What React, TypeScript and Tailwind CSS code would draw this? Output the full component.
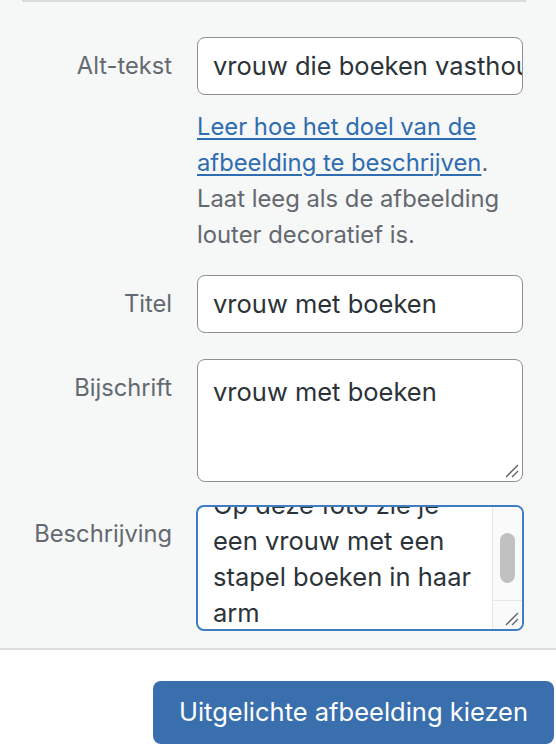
import React from "react";

const font = { fontFamily: "Inter, 'Noto Sans', sans-serif" };

function Grip() {
  return (
    <svg width="14" height="14" viewBox="0 0 14 14" className="absolute right-[3px] bottom-[3px]">
      <line x1="1" y1="13" x2="13" y2="1" stroke="#5b5f63" strokeWidth="1.3" />
      <line x1="7" y1="13" x2="13" y2="7" stroke="#5b5f63" strokeWidth="1.3" />
    </svg>
  );
}

function Label({ children }: { children: React.ReactNode }) {
  return (
    <div className="w-[172px] shrink-0 text-right pt-[11px] text-[23.7px] leading-[36px] text-[#646970]">
      {children}
    </div>
  );
}

export default function App() {
  return (
    <div style={font} className="w-[556px] h-[746px] overflow-hidden bg-[#f6f7f7] flex flex-col">
      <div className="ml-[22px] w-[504px] h-[2px] bg-[#dcdcde] shrink-0" />
      <div className="flex flex-col pt-[35px] h-[646px] shrink-0">
        {/* Alt-tekst */}
        <div className="flex gap-[25px]">
          <Label>Alt-tekst</Label>
          <div className="flex flex-col">
            <div className="w-[326px] h-[58px] rounded-[8px] border border-[#8c8f94] bg-white overflow-hidden pl-[15px] flex items-center">
              <span className="whitespace-nowrap text-[25.5px] text-[#2c3338]">vrouw die boeken vasthoudt</span>
            </div>
            <p className="mt-[14px] w-[326px] text-[23.8px] leading-[36px] text-[#646970]">
              <a className="text-[#2f6db0] underline underline-offset-[3px] decoration-[2px]">
                Leer hoe het doel van de afbeelding te beschrijven
              </a>
              . Laat leeg als de afbeelding louter decoratief is.
            </p>
          </div>
        </div>
        {/* Titel */}
        <div className="flex gap-[25px] mt-[22px]">
          <Label>Titel</Label>
          <div className="w-[326px] h-[58px] rounded-[8px] border border-[#8c8f94] bg-white overflow-hidden pl-[15px] flex items-center">
            <span className="whitespace-nowrap text-[25.5px] text-[#2c3338]">vrouw met boeken</span>
          </div>
        </div>
        {/* Bijschrift */}
        <div className="flex gap-[25px] mt-[26px]">
          <Label>Bijschrift</Label>
          <div className="relative w-[326px] h-[123px] rounded-[8px] border border-[#8c8f94] bg-white overflow-hidden pl-[15px] pt-[14px]">
            <span className="text-[25.5px] leading-[36px] text-[#2c3338]">vrouw met boeken</span>
            <Grip />
          </div>
        </div>
        {/* Beschrijving */}
        <div className="flex gap-[25px] mt-[23px]">
          <Label>Beschrijving</Label>
          <div className="relative w-[328px] h-[126px] -ml-px rounded-[8px] border-2 border-[#3f7cc0] bg-white overflow-hidden">
            <div className="absolute left-[15px] top-[-20px] w-[275px] text-[25.5px] leading-[36px] text-[#2c3338]">
              Op deze foto zie je een vrouw met een stapel boeken in haar arm
            </div>
            <div className="absolute right-0 top-0 bottom-0 w-[30px] bg-[#fafafa] border-l border-[#e6e6e6] flex flex-col">
              <div className="flex-1 relative">
                <div className="absolute left-[7px] top-[26px] w-[15px] h-[50px] rounded-full bg-[#c1c1c1]" />
              </div>
              <div className="h-[29px] border-t border-[#e6e6e6] relative">
                <Grip />
              </div>
            </div>
          </div>
        </div>
      </div>
      <div className="flex-1 bg-white border-t-2 border-[#dcdcde] pt-[31px]">
        <button className="ml-[153px] w-[401px] h-[63px] rounded-[8px] bg-[#3a6fae] text-white text-[25.5px] flex items-center justify-center">
          Uitgelichte afbeelding kiezen
        </button>
      </div>
    </div>
  );
}
